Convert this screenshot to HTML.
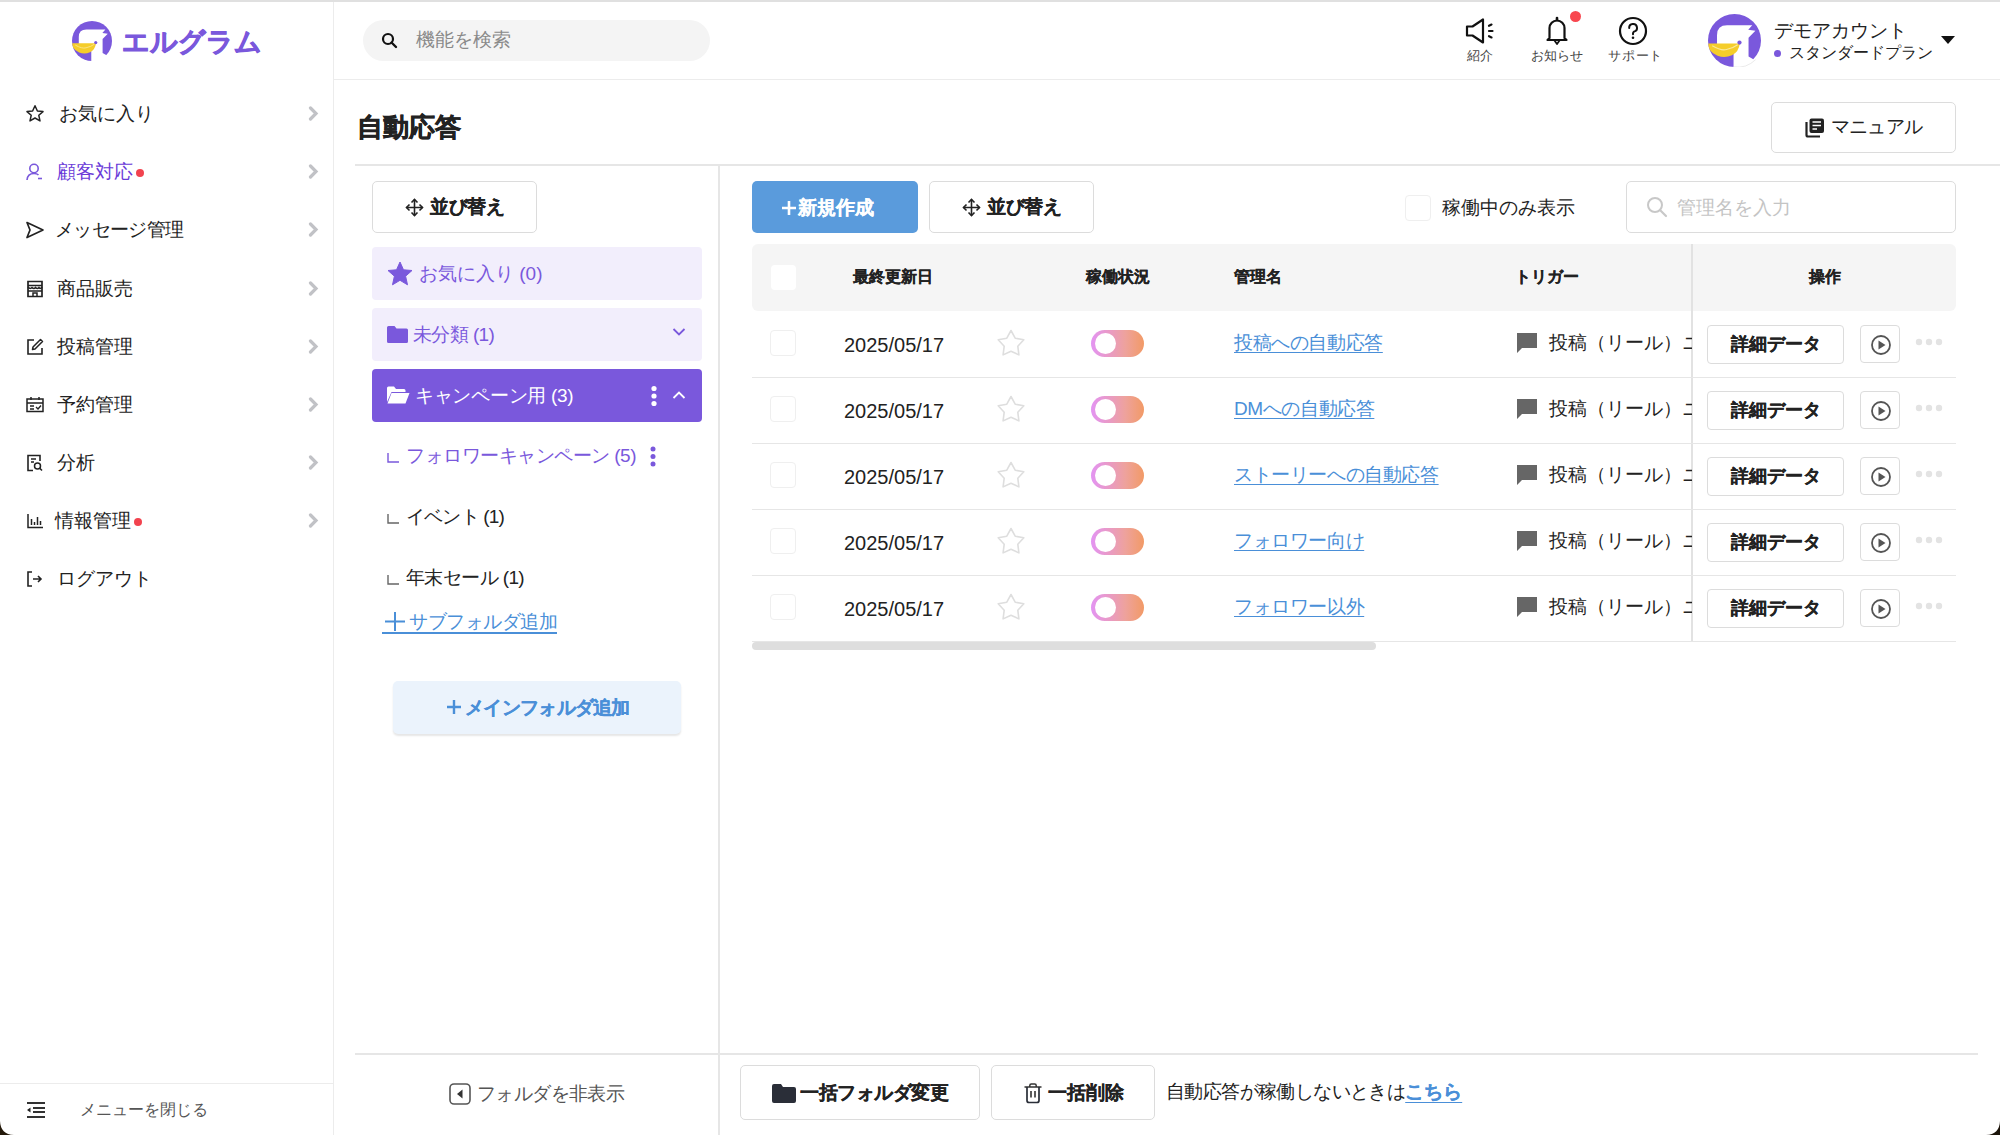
<!DOCTYPE html>
<html lang="ja"><head><meta charset="utf-8">
<style>
*{box-sizing:border-box;margin:0;padding:0}
html,body{width:2000px;height:1135px;overflow:hidden;background:#fff;font-family:"Liberation Sans",sans-serif;color:#222}
.a{position:absolute}
.nav{position:absolute;left:0;width:333px;height:40px;font-size:19px;line-height:40px;color:#222;white-space:nowrap}
.nav svg.ic{position:absolute;left:25px;top:11px}
.nav .t{position:absolute;left:57px;top:1px}
.nav svg.chev{position:absolute;left:308px;top:13px}
.dot{display:inline-block;width:8px;height:8px;border-radius:50%;background:#f2434f;vertical-align:middle;margin-left:3px;position:relative;top:0px}
.btn{position:absolute;border:1px solid #dcdcdc;border-radius:5px;background:#fff;font-weight:bold;font-size:19px;text-align:center;color:#222;white-space:nowrap}
.t1{white-space:nowrap}
.th,.det,.btn span,[style*="font-weight:bold"]{-webkit-text-stroke:0.2px currentColor}
.th{position:absolute;top:244px;height:66px;line-height:66px;font-size:16px;font-weight:bold;color:#222;white-space:nowrap}
.row{position:absolute;left:752px;width:1204px;height:66px}
.rl{position:absolute;left:752px;width:1204px;height:1px;background:#e6e6e6}
.cb{position:absolute;width:26px;height:26px;border:1px solid #efefef;border-radius:4px;background:#fff}
.date{position:absolute;left:92px;top:2px;line-height:66px;font-size:20px;color:#222;letter-spacing:0px}
.star{position:absolute;left:244px;top:18px}
.tog{position:absolute;left:339px;top:20px;width:53px;height:27px;border-radius:13.5px;background:linear-gradient(90deg,#e394f3 0%,#e99ac4 35%,#eea29c 65%,#f29a66 100%)}
.tog:after{content:"";position:absolute;left:3.5px;top:3px;width:21px;height:21px;border-radius:50%;background:#fff}
.lnk{position:absolute;left:482px;top:0;line-height:66px;font-size:19px;color:#4a8fd8;text-decoration:underline;text-underline-offset:3px;white-space:nowrap;letter-spacing:-0.4px}
.trig{position:absolute;left:764px;top:1px;width:176px;height:64px;overflow:hidden;line-height:64px;font-size:19px;color:#222;white-space:nowrap}
.trig svg{position:absolute;left:0;top:21px}
.trig span{position:absolute;left:33px;top:0}
.det{position:absolute;left:955px;top:15px;width:137px;height:39px;border:1px solid #dcdcdc;border-radius:4px;font-size:18px;font-weight:bold;text-align:center;line-height:36px;color:#222;background:#fff}
.play{position:absolute;left:1108px;top:15px;width:40px;height:38px;border:1px solid #dcdcdc;border-radius:4px;background:#fff}
.play svg{position:absolute;left:9px;top:8px}
.more{position:absolute;left:1163px;top:28px}
</style></head><body>
<div class="a" style="left:0;top:0;width:2000px;height:2px;background:#e0e0e0"></div>
<div class="a" style="left:333px;top:2px;width:1px;height:1133px;background:#ececec"></div>
<div class="a" style="left:334px;top:79px;width:1666px;height:1px;background:#ececec"></div>

<!-- logo -->
<svg class="a" style="left:72px;top:20.5px" width="40" height="40" viewBox="0 0 100 100"><defs><clipPath id="lc"><circle cx="50" cy="50" r="50"/></clipPath></defs><circle cx="50" cy="50" r="50" fill="#7a58dc"/><path d="M17 60 L17 40 Q17 21.4 36 21.4 L83.5 21.4 L75.9 29.9 L89.4 31.6 L76.5 44.9 L76.5 80 L92 89 L92 110 L48.2 110 L48.2 60Z" fill="#fff"/><g clip-path="url(#lc)"><path d="M-2 55.7 L60 55.7 Q58 72 45 78 Q32 84 18 79 Q6 73 -2 62Z" fill="#f5cd2a"/><path d="M8 60 Q25 70 35 67 Q48 64 56 58" fill="none" stroke="#fbe89a" stroke-width="2"/><circle cx="59.4" cy="54" r="4" fill="#7a58dc"/></g></svg>
<div class="a t1" style="left:122px;top:22px;font-size:27px;line-height:40px;font-weight:bold;color:#7a58dc;letter-spacing:0px;-webkit-text-stroke:0.8px #7a58dc">エルグラム</div>

<!-- search -->
<div class="a" style="left:363px;top:20px;width:347px;height:41px;border-radius:21px;background:#f4f4f4"></div>
<svg class="a" style="left:381px;top:32px" width="17" height="17" viewBox="0 0 17 17"><circle cx="7" cy="7" r="5" fill="none" stroke="#111" stroke-width="2.2"/><path d="M10.5 10.5 L15 15" stroke="#111" stroke-width="2.4" stroke-linecap="round"/></svg>
<div class="a t1" style="left:416px;top:19px;line-height:41px;font-size:19px;color:#8a8a8a">機能を検索</div>

<!-- sidebar nav -->
<div class="nav" style="top:93px"><svg class="ic" width="20" height="20" viewBox="0 0 20 20"><path d="M10 1.8 L12.4 7 L18 7.6 L13.8 11.3 L15 16.9 L10 14 L5 16.9 L6.2 11.3 L2 7.6 L7.6 7Z" fill="none" stroke="#222" stroke-width="1.5" stroke-linejoin="round"/></svg><span class="t" style="left:59px">お気に入り</span><svg class="chev" width="11" height="15" viewBox="0 0 11 15"><path d="M2.5 2 L8 7.5 L2.5 13" fill="none" stroke="#c1c2c6" stroke-width="3.2" stroke-linecap="round"/></svg></div>
<div class="nav" style="top:151px;color:#6a3ad8"><svg class="ic" width="20" height="20" viewBox="0 0 20 20"><circle cx="9" cy="6.5" r="4.2" fill="none" stroke="#7a58dc" stroke-width="1.6"/><path d="M2 18 Q2.5 11.5 9 11.5 Q12 11.5 13.5 13" fill="none" stroke="#7a58dc" stroke-width="1.6"/><path d="M13 16.5 H17" stroke="#7a58dc" stroke-width="1.6"/></svg><span class="t" style="left:57px">顧客対応<span class="dot"></span></span><svg class="chev" width="11" height="15" viewBox="0 0 11 15"><path d="M2.5 2 L8 7.5 L2.5 13" fill="none" stroke="#c1c2c6" stroke-width="3.2" stroke-linecap="round"/></svg></div>
<div class="nav" style="top:209px"><svg class="ic" width="20" height="20" viewBox="0 0 20 20"><path d="M2 2.5 L18 10 L2 17.5 L5 10Z" fill="none" stroke="#222" stroke-width="1.7" stroke-linejoin="round"/></svg><span class="t" style="left:55px;letter-spacing:-0.7px">メッセージ管理</span><svg class="chev" width="11" height="15" viewBox="0 0 11 15"><path d="M2.5 2 L8 7.5 L2.5 13" fill="none" stroke="#c1c2c6" stroke-width="3.2" stroke-linecap="round"/></svg></div>
<div class="nav" style="top:268px"><svg class="ic" width="20" height="20" viewBox="0 0 20 20"><path d="M3 2.5 H17 V17.5 H3Z M3 6.5 H17" fill="none" stroke="#222" stroke-width="1.7"/><path d="M3 8 Q5 10.5 7 8.5 Q9 10.5 10.5 8.5 Q12.5 10.5 14 8.5 Q15.5 10.5 17 8" fill="none" stroke="#222" stroke-width="1.5"/><path d="M3 12 H17 M8 17.5 V14 H12 V17.5" fill="none" stroke="#222" stroke-width="1.5"/></svg><span class="t" style="left:57px">商品販売</span><svg class="chev" width="11" height="15" viewBox="0 0 11 15"><path d="M2.5 2 L8 7.5 L2.5 13" fill="none" stroke="#c1c2c6" stroke-width="3.2" stroke-linecap="round"/></svg></div>
<div class="nav" style="top:326px"><svg class="ic" width="20" height="20" viewBox="0 0 20 20"><path d="M9 3 H3 V17 H17 V11" fill="none" stroke="#222" stroke-width="1.6"/><path d="M15.5 2.5 L17.5 4.5 L10 12 L7.5 12.5 L8 10Z" fill="none" stroke="#222" stroke-width="1.5" stroke-linejoin="round"/></svg><span class="t" style="left:57px">投稿管理</span><svg class="chev" width="11" height="15" viewBox="0 0 11 15"><path d="M2.5 2 L8 7.5 L2.5 13" fill="none" stroke="#c1c2c6" stroke-width="3.2" stroke-linecap="round"/></svg></div>
<div class="nav" style="top:384px"><svg class="ic" width="20" height="20" viewBox="0 0 20 20"><path d="M2 4 H18 V16.5 H2Z M2 8 H18 M6 2 V5 M14 2 V5 M5 11 H9 M5 14 H9" fill="none" stroke="#222" stroke-width="1.5"/><path d="M11 12 L13 14 L16 10.5" fill="none" stroke="#222" stroke-width="1.4"/></svg><span class="t" style="left:57px">予約管理</span><svg class="chev" width="11" height="15" viewBox="0 0 11 15"><path d="M2.5 2 L8 7.5 L2.5 13" fill="none" stroke="#c1c2c6" stroke-width="3.2" stroke-linecap="round"/></svg></div>
<div class="nav" style="top:442px"><svg class="ic" width="20" height="20" viewBox="0 0 20 20"><path d="M15 8 V2.5 H3 V17.5 H8" fill="none" stroke="#222" stroke-width="1.6"/><path d="M6 6 H11 M6 9 H9" stroke="#222" stroke-width="1.4"/><circle cx="12.5" cy="13" r="3" fill="none" stroke="#222" stroke-width="1.5"/><path d="M14.5 15 L17 17.5" stroke="#222" stroke-width="1.6"/></svg><span class="t" style="left:57px">分析</span><svg class="chev" width="11" height="15" viewBox="0 0 11 15"><path d="M2.5 2 L8 7.5 L2.5 13" fill="none" stroke="#c1c2c6" stroke-width="3.2" stroke-linecap="round"/></svg></div>
<div class="nav" style="top:500px"><svg class="ic" width="20" height="20" viewBox="0 0 20 20"><path d="M3 3 V16.5 H18 M6.5 8 V14 M9.5 11 V14 M12.5 6 V14 M15.5 10 V14" fill="none" stroke="#222" stroke-width="1.5"/></svg><span class="t" style="left:55px">情報管理<span class="dot"></span></span><svg class="chev" width="11" height="15" viewBox="0 0 11 15"><path d="M2.5 2 L8 7.5 L2.5 13" fill="none" stroke="#c1c2c6" stroke-width="3.2" stroke-linecap="round"/></svg></div>
<div class="nav" style="top:558px"><svg class="ic" width="20" height="20" viewBox="0 0 20 20"><path d="M7 3 H3 V17 H7" fill="none" stroke="#222" stroke-width="1.6"/><path d="M8 10 H16 M13 7 L16 10 L13 13" fill="none" stroke="#222" stroke-width="1.6"/></svg><span class="t" style="left:57px">ログアウト</span></div>

<!-- sidebar bottom -->
<div class="a" style="left:0;top:1083px;width:333px;height:1px;background:#ececec"></div>
<svg class="a" style="left:26px;top:1101px" width="20" height="18" viewBox="0 0 20 18"><path d="M1 2 H19 M7 7 H19 M7 11 H19 M1 16 H19" stroke="#333" stroke-width="2.2"/><path d="M1 9 L4.5 6.5 V11.5Z" fill="#222"/></svg>
<div class="a t1" style="left:80px;top:1097px;font-size:16px;line-height:26px;color:#555">メニューを閉じる</div>
<!-- header right -->
<svg class="a" style="left:1464px;top:17px" width="32" height="28" viewBox="0 0 32 28"><path d="M3 9.5 H8.5 L19 2.5 V25.5 L8.5 18.5 H3Z" fill="none" stroke="#111" stroke-width="2.2" stroke-linejoin="round"/><path d="M25 8.8 L27.5 7.6 M25 14 H28.5 M25 19.2 L27.5 20.4" stroke="#111" stroke-width="2.2" stroke-linecap="round"/></svg>
<div class="a t1" style="left:1467px;top:47px;font-size:13px;line-height:18px;color:#444">紹介</div>
<svg class="a" style="left:1543px;top:15px" width="28" height="31" viewBox="0 0 28 31"><path d="M4.5 25 H23.5 L21.5 23 V13 A7.5 7.5 0 0 0 6.5 13 V23Z" fill="none" stroke="#111" stroke-width="2.2" stroke-linejoin="round"/><path d="M11.5 25.5 L14 29 L16.5 25.5" fill="none" stroke="#111" stroke-width="1.8" stroke-linejoin="round"/><path d="M14 3 V5" stroke="#111" stroke-width="2.6" stroke-linecap="round"/></svg>
<div class="a" style="left:1570px;top:11px;width:11px;height:11px;border-radius:50%;background:#f8474f"></div>
<div class="a t1" style="left:1531px;top:47px;font-size:13px;line-height:18px;color:#444">お知らせ</div>
<svg class="a" style="left:1618px;top:16px" width="30" height="30" viewBox="0 0 30 30"><circle cx="15" cy="15" r="13" fill="none" stroke="#111" stroke-width="2.2"/><path d="M11.2 12 A3.9 3.9 0 1 1 16 15.6 Q15 16.2 15 17.5 V18.3" fill="none" stroke="#111" stroke-width="2" stroke-linecap="round"/><circle cx="15" cy="21.8" r="1.3" fill="#111"/></svg>
<div class="a t1" style="left:1608px;top:47px;font-size:13px;line-height:18px;color:#444;letter-spacing:0.8px">サポート</div>

<svg class="a" style="left:1708px;top:14px" width="53" height="53" viewBox="0 0 100 100"><defs><clipPath id="cc"><circle cx="50" cy="50" r="50"/></clipPath></defs><circle cx="50" cy="50" r="50" fill="#7a58dc"/><path d="M17 60 L17 40 Q17 21.4 36 21.4 L83.5 21.4 L75.9 29.9 L89.4 31.6 L76.5 44.9 L76.5 80 L92 89 L92 110 L48.2 110 L48.2 60Z" fill="#fff"/><g clip-path="url(#cc)"><path d="M-2 55.7 L60 55.7 Q58 72 45 78 Q32 84 18 79 Q6 73 -2 62Z" fill="#f5cd2a"/><path d="M8 60 Q25 70 35 67 Q48 64 56 58" fill="none" stroke="#fbe89a" stroke-width="2"/><circle cx="59.4" cy="54" r="4" fill="#7a58dc"/></g><path d="M90 86 A50 50 0 0 1 48 99.9" fill="none" stroke="#ddd" stroke-width="1.2"/></svg>
<div class="a t1" style="left:1774px;top:18px;font-size:19px;line-height:26px;color:#222;letter-spacing:0px">デモアカウント</div>
<div class="a" style="left:1774px;top:50px;width:7px;height:7px;border-radius:50%;background:#7a58dc"></div>
<div class="a t1" style="left:1789px;top:42px;font-size:16px;line-height:22px;color:#222;letter-spacing:0px">スタンダードプラン</div>
<svg class="a" style="left:1940px;top:35px" width="16" height="10" viewBox="0 0 16 10"><path d="M1 1 H15 L8 9Z" fill="#111"/></svg>

<!-- title -->
<div class="a t1" style="left:357px;top:107px;font-size:26px;line-height:40px;font-weight:bold;color:#222;-webkit-text-stroke:0.6px #222">自動応答</div>
<div class="btn" style="left:1771px;top:102px;width:185px;height:51px;line-height:49px;font-weight:normal;font-size:19px"><svg style="position:absolute;left:33px;top:15px" width="20" height="20" viewBox="0 0 20 20"><path d="M1.5 4 V17 Q1.5 18.5 3 18.5 H15" fill="none" stroke="#222" stroke-width="2.2"/><rect x="4.5" y="0.5" width="14.5" height="14.5" rx="2" fill="#222"/><path d="M7.5 4 H16 M7.5 7.5 H16 M7.5 11 H12" stroke="#fff" stroke-width="1.5"/></svg><span style="position:absolute;left:59px;top:-1px;letter-spacing:-0.8px;-webkit-text-stroke:0">マニュアル</span></div>
<div class="a" style="left:355px;top:164px;width:1645px;height:2px;background:#e6e6e6"></div>
<div class="a" style="left:718px;top:166px;width:2px;height:969px;background:#e6e6e6"></div>

<!-- folder panel -->
<div class="btn" style="left:372px;top:181px;width:165px;height:52px;line-height:50px"><svg style="position:absolute;left:32px;top:16px" width="19" height="19" viewBox="0 0 19 19"><path d="M9.5 1.5 V17.5 M1.5 9.5 H17.5" stroke="#222" stroke-width="1.6"/><path d="M6.5 4.5 L9.5 1.5 L12.5 4.5 M6.5 14.5 L9.5 17.5 L12.5 14.5 M4.5 6.5 L1.5 9.5 L4.5 12.5 M14.5 6.5 L17.5 9.5 L14.5 12.5" fill="none" stroke="#222" stroke-width="1.6" stroke-linejoin="miter"/></svg><span style="position:absolute;left:57px;top:0;letter-spacing:-0.5px">並び替え</span></div>

<div class="a" style="left:372px;top:247px;width:330px;height:53px;border-radius:4px;background:#f2eefc"></div>
<svg class="a" style="left:387px;top:261px" width="26" height="26" viewBox="0 0 26 26"><path d="M13 1 L16.5 8.8 L25 9.5 L18.6 15.2 L20.5 23.8 L13 19.3 L5.5 23.8 L7.4 15.2 L1 9.5 L9.5 8.8Z" fill="#7a58dc" stroke="#7a58dc" stroke-width="1" stroke-linejoin="round"/></svg>
<div class="a t1" style="left:419px;top:247px;font-size:19px;line-height:53px;color:#7a58dc">お気に入り (0)</div>

<div class="a" style="left:372px;top:308px;width:330px;height:53px;border-radius:4px;background:#f2eefc"></div>
<svg class="a" style="left:387px;top:326px" width="21" height="17" viewBox="0 0 21 17"><path d="M0 1.5 Q0 0 1.5 0 H7.5 L9.5 2.5 H19.5 Q21 2.5 21 4 V15.5 Q21 17 19.5 17 H1.5 Q0 17 0 15.5Z" fill="#7a58dc"/></svg>
<div class="a t1" style="left:413px;top:308px;font-size:19px;line-height:53px;color:#7a58dc;letter-spacing:-0.6px">未分類 (1)</div>
<svg class="a" style="left:672px;top:327px" width="14" height="10" viewBox="0 0 14 10"><path d="M1.5 2 L7 7.5 L12.5 2" fill="none" stroke="#7a58dc" stroke-width="1.8"/></svg>

<div class="a" style="left:372px;top:369px;width:330px;height:53px;border-radius:4px;background:#7a58dc"></div>
<svg class="a" style="left:387px;top:386px" width="23" height="18" viewBox="0 0 23 18"><path d="M0 2 Q0 0.5 1.5 0.5 H7 L9 3 H17 Q18.5 3 18.5 4.5 V6 H4.5 L0 16Z" fill="#fff"/><path d="M4.5 7 H22.5 L18.5 17.5 H0.5Z" fill="#fff"/></svg>
<div class="a t1" style="left:415px;top:369px;font-size:19px;line-height:53px;color:#fff;letter-spacing:-0.3px">キャンペーン用 (3)</div>
<svg class="a" style="left:650px;top:385px" width="8" height="22" viewBox="0 0 8 22"><circle cx="4" cy="3.5" r="2.6" fill="#fff"/><circle cx="4" cy="11" r="2.6" fill="#fff"/><circle cx="4" cy="18.5" r="2.6" fill="#fff"/></svg>
<svg class="a" style="left:672px;top:390px" width="14" height="10" viewBox="0 0 14 10"><path d="M1.5 8 L7 2.5 L12.5 8" fill="none" stroke="#fff" stroke-width="1.8"/></svg>

<svg class="a" style="left:387px;top:453px" width="12" height="10" viewBox="0 0 12 10"><path d="M1 0 V9 H12" fill="none" stroke="#7a58dc" stroke-width="1.4"/></svg>
<div class="a t1" style="left:406px;top:440px;font-size:19px;line-height:32px;color:#7a58dc;letter-spacing:-0.5px">フォロワーキャンペーン (5)</div>
<svg class="a" style="left:649px;top:446px" width="8" height="21" viewBox="0 0 8 21"><circle cx="4" cy="3" r="2.5" fill="#7a58dc"/><circle cx="4" cy="10.5" r="2.5" fill="#7a58dc"/><circle cx="4" cy="18" r="2.5" fill="#7a58dc"/></svg>

<svg class="a" style="left:387px;top:514px" width="12" height="10" viewBox="0 0 12 10"><path d="M1 0 V9 H12" fill="none" stroke="#666" stroke-width="1.4"/></svg>
<div class="a t1" style="left:406px;top:501px;font-size:19px;line-height:32px;color:#222;letter-spacing:-0.8px">イベント (1)</div>
<svg class="a" style="left:387px;top:575px" width="12" height="10" viewBox="0 0 12 10"><path d="M1 0 V9 H12" fill="none" stroke="#666" stroke-width="1.4"/></svg>
<div class="a t1" style="left:406px;top:562px;font-size:19px;line-height:32px;color:#222;letter-spacing:-0.6px">年末セール (1)</div>

<svg class="a" style="left:385px;top:612px" width="20" height="19" viewBox="0 0 20 19"><path d="M0 9.5 H20 M10 0 V19" stroke="#4a8fd8" stroke-width="2"/></svg>
<div class="a t1" style="left:409px;top:606px;font-size:19px;line-height:32px;color:#4a8fd8;letter-spacing:-0.5px">サブフォルダ追加</div>
<div class="a" style="left:382px;top:632px;width:175px;height:2px;background:#4a8fd8"></div>

<div class="a" style="left:393px;top:681px;width:288px;height:53px;border-radius:5px;background:#ebf3fc;box-shadow:0 2px 2px rgba(0,0,0,0.10)"></div>
<svg class="a" style="left:447px;top:700px" width="14" height="14" viewBox="0 0 14 14"><path d="M0 7 H14 M7 0 V14" stroke="#4a8fd8" stroke-width="2.4"/></svg>
<div class="a t1" style="left:465px;top:681px;font-size:19px;line-height:53px;font-weight:bold;color:#4a8fd8;letter-spacing:-0.7px">メインフォルダ追加</div>
<!-- toolbar -->
<div class="a" style="left:752px;top:181px;width:166px;height:52px;border-radius:5px;background:#5a9bdc"></div>
<svg class="a" style="left:782px;top:201px" width="14" height="14" viewBox="0 0 14 14"><path d="M0 7 H14 M7 0 V14" stroke="#fff" stroke-width="2.6"/></svg>
<div class="a t1" style="left:798px;top:181px;font-size:19px;line-height:53px;font-weight:bold;color:#fff">新規作成</div>
<div class="btn" style="left:929px;top:181px;width:165px;height:52px;line-height:50px"><svg style="position:absolute;left:32px;top:16px" width="19" height="19" viewBox="0 0 19 19"><path d="M9.5 1.5 V17.5 M1.5 9.5 H17.5" stroke="#222" stroke-width="1.6"/><path d="M6.5 4.5 L9.5 1.5 L12.5 4.5 M6.5 14.5 L9.5 17.5 L12.5 14.5 M4.5 6.5 L1.5 9.5 L4.5 12.5 M14.5 6.5 L17.5 9.5 L14.5 12.5" fill="none" stroke="#222" stroke-width="1.6" stroke-linejoin="miter"/></svg><span style="position:absolute;left:57px;top:0;letter-spacing:-0.5px">並び替え</span></div>
<div class="cb" style="left:1405px;top:195px;width:26px;height:26px"></div>
<div class="a t1" style="left:1442px;top:190px;font-size:19px;line-height:36px;color:#222">稼働中のみ表示</div>
<div class="a" style="left:1626px;top:181px;width:330px;height:52px;border:1px solid #dcdcdc;border-radius:5px"></div>
<svg class="a" style="left:1646px;top:196px" width="22" height="22" viewBox="0 0 22 22"><circle cx="9" cy="9" r="7" fill="none" stroke="#c8c8c8" stroke-width="2"/><path d="M14 14 L20 20" stroke="#c8c8c8" stroke-width="2.2" stroke-linecap="round"/></svg>
<div class="a t1" style="left:1677px;top:181px;font-size:19px;line-height:53px;color:#c4c4c4">管理名を入力</div>

<!-- table header -->
<div class="a" style="left:752px;top:244px;width:1204px;height:67px;border-radius:6px;background:#f5f5f5"></div>
<div class="cb" style="left:771px;top:265px;width:25px;height:25px;border:none"></div>
<div class="th" style="left:853px">最終更新日</div>
<div class="th" style="left:1086px">稼働状況</div>
<div class="th" style="left:1234px">管理名</div>
<div class="th" style="left:1515px">トリガー</div>
<div class="th" style="left:1809px">操作</div>
<div class="a" style="left:1691px;top:244px;width:2px;height:397px;background:#e2e2e2"></div>

<!-- rows -->
<div class="row" style="top:310px"><div class="cb" style="left:18px;top:20px"></div><div class="date">2025/05/17</div><svg class="star" width="30" height="30" viewBox="0 0 30 30"><path d="M15.0 2.5 L19.2 10.2 L27.8 11.8 L21.8 18.2 L22.9 26.9 L15.0 23.2 L7.1 26.9 L8.2 18.2 L2.2 11.8 L10.8 10.2Z" fill="none" stroke="#dedede" stroke-width="1.6" stroke-linejoin="round"/></svg><div class="tog"></div><div class="lnk">投稿への自動応答</div><div class="trig"><svg width="22" height="22" viewBox="0 0 22 22"><path d="M1 1 H21 V16 H6 L1 21Z" fill="#666"/></svg><span>投稿（リール）ニ</span></div><div class="det">詳細データ</div><div class="play"><svg width="22" height="22" viewBox="0 0 22 22"><circle cx="11" cy="11" r="9" fill="none" stroke="#555" stroke-width="1.8"/><path d="M8.5 6.5 L15.5 11 L8.5 15.5Z" fill="#555"/></svg></div><svg class="more" width="28" height="8" viewBox="0 0 28 8"><circle cx="4" cy="4" r="3.2" fill="#e3e3e3"/><circle cx="14" cy="4" r="3.2" fill="#e3e3e3"/><circle cx="24" cy="4" r="3.2" fill="#e3e3e3"/></svg></div>
<div class="row" style="top:376px"><div class="cb" style="left:18px;top:20px"></div><div class="date">2025/05/17</div><svg class="star" width="30" height="30" viewBox="0 0 30 30"><path d="M15.0 2.5 L19.2 10.2 L27.8 11.8 L21.8 18.2 L22.9 26.9 L15.0 23.2 L7.1 26.9 L8.2 18.2 L2.2 11.8 L10.8 10.2Z" fill="none" stroke="#dedede" stroke-width="1.6" stroke-linejoin="round"/></svg><div class="tog"></div><div class="lnk">DMへの自動応答</div><div class="trig"><svg width="22" height="22" viewBox="0 0 22 22"><path d="M1 1 H21 V16 H6 L1 21Z" fill="#666"/></svg><span>投稿（リール）ニ</span></div><div class="det">詳細データ</div><div class="play"><svg width="22" height="22" viewBox="0 0 22 22"><circle cx="11" cy="11" r="9" fill="none" stroke="#555" stroke-width="1.8"/><path d="M8.5 6.5 L15.5 11 L8.5 15.5Z" fill="#555"/></svg></div><svg class="more" width="28" height="8" viewBox="0 0 28 8"><circle cx="4" cy="4" r="3.2" fill="#e3e3e3"/><circle cx="14" cy="4" r="3.2" fill="#e3e3e3"/><circle cx="24" cy="4" r="3.2" fill="#e3e3e3"/></svg></div>
<div class="row" style="top:442px"><div class="cb" style="left:18px;top:20px"></div><div class="date">2025/05/17</div><svg class="star" width="30" height="30" viewBox="0 0 30 30"><path d="M15.0 2.5 L19.2 10.2 L27.8 11.8 L21.8 18.2 L22.9 26.9 L15.0 23.2 L7.1 26.9 L8.2 18.2 L2.2 11.8 L10.8 10.2Z" fill="none" stroke="#dedede" stroke-width="1.6" stroke-linejoin="round"/></svg><div class="tog"></div><div class="lnk">ストーリーへの自動応答</div><div class="trig"><svg width="22" height="22" viewBox="0 0 22 22"><path d="M1 1 H21 V16 H6 L1 21Z" fill="#666"/></svg><span>投稿（リール）ニ</span></div><div class="det">詳細データ</div><div class="play"><svg width="22" height="22" viewBox="0 0 22 22"><circle cx="11" cy="11" r="9" fill="none" stroke="#555" stroke-width="1.8"/><path d="M8.5 6.5 L15.5 11 L8.5 15.5Z" fill="#555"/></svg></div><svg class="more" width="28" height="8" viewBox="0 0 28 8"><circle cx="4" cy="4" r="3.2" fill="#e3e3e3"/><circle cx="14" cy="4" r="3.2" fill="#e3e3e3"/><circle cx="24" cy="4" r="3.2" fill="#e3e3e3"/></svg></div>
<div class="row" style="top:508px"><div class="cb" style="left:18px;top:20px"></div><div class="date">2025/05/17</div><svg class="star" width="30" height="30" viewBox="0 0 30 30"><path d="M15.0 2.5 L19.2 10.2 L27.8 11.8 L21.8 18.2 L22.9 26.9 L15.0 23.2 L7.1 26.9 L8.2 18.2 L2.2 11.8 L10.8 10.2Z" fill="none" stroke="#dedede" stroke-width="1.6" stroke-linejoin="round"/></svg><div class="tog"></div><div class="lnk">フォロワー向け</div><div class="trig"><svg width="22" height="22" viewBox="0 0 22 22"><path d="M1 1 H21 V16 H6 L1 21Z" fill="#666"/></svg><span>投稿（リール）ニ</span></div><div class="det">詳細データ</div><div class="play"><svg width="22" height="22" viewBox="0 0 22 22"><circle cx="11" cy="11" r="9" fill="none" stroke="#555" stroke-width="1.8"/><path d="M8.5 6.5 L15.5 11 L8.5 15.5Z" fill="#555"/></svg></div><svg class="more" width="28" height="8" viewBox="0 0 28 8"><circle cx="4" cy="4" r="3.2" fill="#e3e3e3"/><circle cx="14" cy="4" r="3.2" fill="#e3e3e3"/><circle cx="24" cy="4" r="3.2" fill="#e3e3e3"/></svg></div>
<div class="row" style="top:574px"><div class="cb" style="left:18px;top:20px"></div><div class="date">2025/05/17</div><svg class="star" width="30" height="30" viewBox="0 0 30 30"><path d="M15.0 2.5 L19.2 10.2 L27.8 11.8 L21.8 18.2 L22.9 26.9 L15.0 23.2 L7.1 26.9 L8.2 18.2 L2.2 11.8 L10.8 10.2Z" fill="none" stroke="#dedede" stroke-width="1.6" stroke-linejoin="round"/></svg><div class="tog"></div><div class="lnk">フォロワー以外</div><div class="trig"><svg width="22" height="22" viewBox="0 0 22 22"><path d="M1 1 H21 V16 H6 L1 21Z" fill="#666"/></svg><span>投稿（リール）ニ</span></div><div class="det">詳細データ</div><div class="play"><svg width="22" height="22" viewBox="0 0 22 22"><circle cx="11" cy="11" r="9" fill="none" stroke="#555" stroke-width="1.8"/><path d="M8.5 6.5 L15.5 11 L8.5 15.5Z" fill="#555"/></svg></div><svg class="more" width="28" height="8" viewBox="0 0 28 8"><circle cx="4" cy="4" r="3.2" fill="#e3e3e3"/><circle cx="14" cy="4" r="3.2" fill="#e3e3e3"/><circle cx="24" cy="4" r="3.2" fill="#e3e3e3"/></svg></div>
<div class="rl" style="top:377px"></div>
<div class="rl" style="top:443px"></div>
<div class="rl" style="top:509px"></div>
<div class="rl" style="top:575px"></div>
<div class="rl" style="top:641px"></div>

<!-- scrollbar -->
<div class="a" style="left:752px;top:642px;width:624px;height:8px;border-radius:4px;background:#dedede"></div>

<!-- bottom bar -->
<div class="a" style="left:355px;top:1053px;width:1623px;height:2px;background:#e6e6e6"></div>
<svg class="a" style="left:449px;top:1083px" width="22" height="22" viewBox="0 0 22 22"><rect x="1" y="1" width="20" height="20" rx="4" fill="none" stroke="#555" stroke-width="1.6"/><path d="M13.5 6.5 V15.5 L8 11Z" fill="#333"/></svg>
<div class="a t1" style="left:477px;top:1078px;font-size:19px;line-height:32px;color:#555;letter-spacing:-0.6px">フォルダを非表示</div>
<div class="btn" style="left:740px;top:1065px;width:240px;height:55px;line-height:53px"><svg style="position:absolute;left:31px;top:18px" width="24" height="19" viewBox="0 0 24 19"><path d="M0 2 Q0 0 2 0 H9 L11 3 H22 Q24 3 24 5 V17 Q24 19 22 19 H2 Q0 19 0 17Z" fill="#2a2e38"/></svg><span style="position:absolute;left:59px;top:0;letter-spacing:-0.5px">一括フォルダ変更</span></div>
<div class="btn" style="left:991px;top:1065px;width:164px;height:55px;line-height:53px"><svg style="position:absolute;left:32px;top:17px" width="18" height="21" viewBox="0 0 18 21"><path d="M0.5 4 H17.5 M5.8 4 V2.5 Q5.8 1 7.3 1 H10.7 Q12.2 1 12.2 2.5 V4" fill="none" stroke="#333" stroke-width="1.5"/><path d="M3 4 V17.5 Q3 19.5 5 19.5 H13 Q15 19.5 15 17.5 V4" fill="none" stroke="#2a2e38" stroke-width="1.7"/><path d="M7 8 V14.5 M11 8 V14.5" stroke="#333" stroke-width="1.6"/></svg><span style="position:absolute;left:56px;top:0">一括削除</span></div>
<div class="a t1" style="left:1166px;top:1076px;font-size:19px;line-height:32px;color:#222;letter-spacing:-0.6px">自動応答が稼働しないときは<span style="color:#4a8fd8;text-decoration:underline;text-underline-offset:4px;font-weight:bold;letter-spacing:0">こちら</span></div>

<!-- window corners -->
<svg class="a" style="left:0;top:1121px" width="14" height="14" viewBox="0 0 14 14"><path d="M0 0 Q0.5 13.5 14 14 H0Z" fill="#24190a"/></svg>
<svg class="a" style="left:1986px;top:1121px" width="14" height="14" viewBox="0 0 14 14"><path d="M14 0 Q13.5 13.5 0 14 H14Z" fill="#1c140a"/></svg>
</body></html>
